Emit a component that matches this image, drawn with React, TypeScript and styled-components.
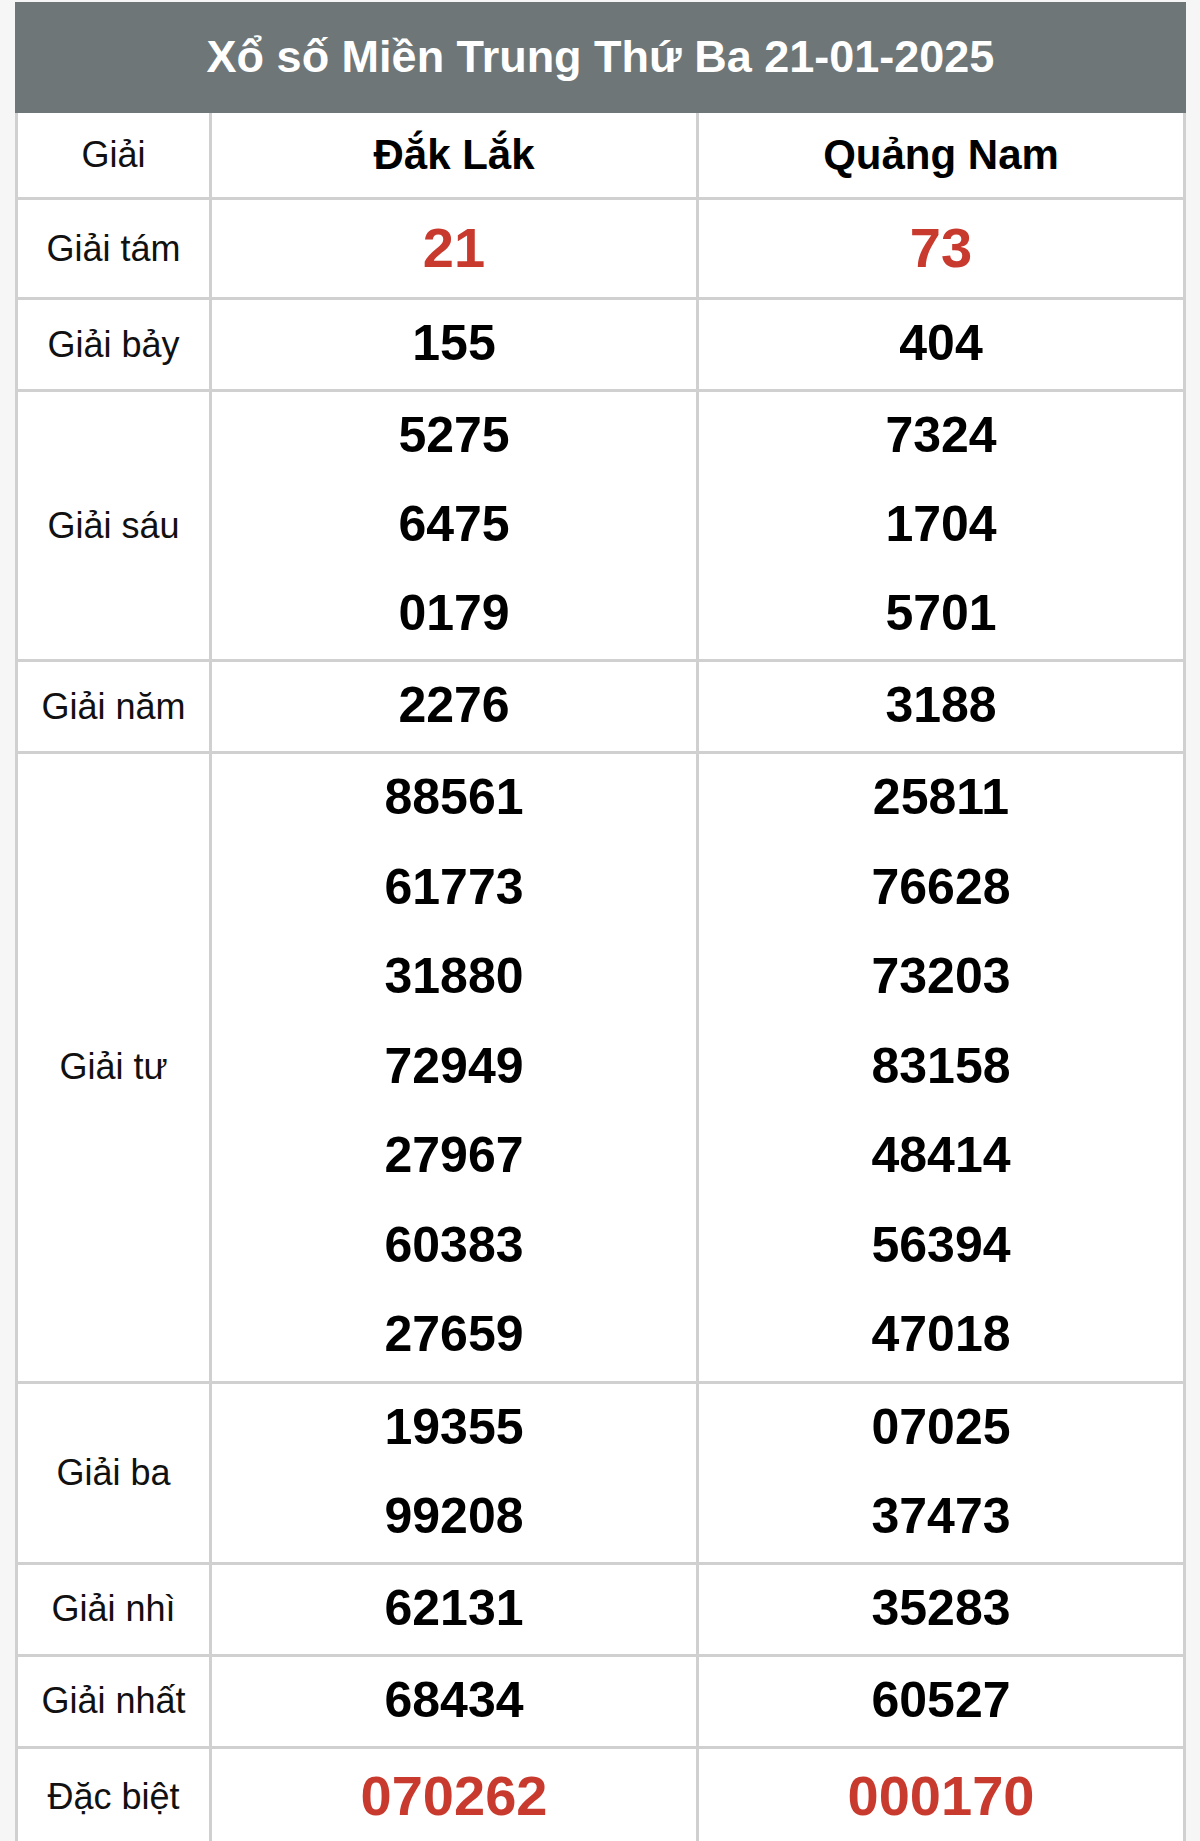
import React from "react";
import styled, { createGlobalStyle } from "styled-components";

const Global = createGlobalStyle`
  html, body { margin: 0; padding: 0; background: #f6f6f6; }
  body { font-family: "Liberation Sans", Arial, Helvetica, sans-serif; }
`;

const Page = styled.div`
  padding: 2px 14px 0 15px;
`;

const Title = styled.div`
  height: 111px;
  background: #6e7677;
  color: #fff;
  font-weight: 700;
  font-size: 45px;
  display: flex;
  align-items: center;
  justify-content: center;
  padding-bottom: 2px;
  box-sizing: border-box;
`;

const Grid = styled.div`
  display: grid;
  grid-template-columns: 191px 1fr 1fr;
  column-gap: 3px;
  row-gap: 3px;
  background: #d0d0d0;
  padding: 0 3px;
`;

const Cell = styled.div<{ $head?: boolean }>`
  background: #fff;
  display: flex;
  flex-direction: column;
  align-items: center;
  justify-content: center;
  min-height: ${(p) => (p.$head ? "84px" : "0")};
`;

const Label = styled.span`
  font-size: 36px;
  color: #111;
`;

const Province = styled.span`
  font-size: 42px;
  font-weight: 700;
  color: #000;
`;

const Num = styled.div<{ $red?: boolean; $h: number }>`
  height: ${(p) => p.$h}px;
  display: flex;
  align-items: center;
  justify-content: center;
  padding-bottom: 3px;
  box-sizing: border-box;
  font-weight: 700;
  font-size: ${(p) => (p.$red ? "56px" : "50px")};
  color: ${(p) => (p.$red ? "#c93a2e" : "#000")};
`;

type Row = { label: string; a: string[]; b: string[]; red?: boolean; h?: number };

const rows: Row[] = [
  { label: "Giải tám", a: ["21"], b: ["73"], red: true, h: 97 },
  { label: "Giải bảy", a: ["155"], b: ["404"] },
  { label: "Giải sáu", a: ["5275", "6475", "0179"], b: ["7324", "1704", "5701"] },
  { label: "Giải năm", a: ["2276"], b: ["3188"] },
  {
    label: "Giải tư",
    a: ["88561", "61773", "31880", "72949", "27967", "60383", "27659"],
    b: ["25811", "76628", "73203", "83158", "48414", "56394", "47018"],
    h: 89.5,
  },
  { label: "Giải ba", a: ["19355", "99208"], b: ["07025", "37473"] },
  { label: "Giải nhì", a: ["62131"], b: ["35283"] },
  { label: "Giải nhất", a: ["68434"], b: ["60527"] },
  { label: "Đặc biệt", a: ["070262"], b: ["000170"], red: true, h: 97 },
];

export default function App() {
  return (
    <Page>
      <Global />
      <Title>Xổ số Miền Trung Thứ Ba 21-01-2025</Title>
      <Grid>
        <Cell $head>
          <Label>Giải</Label>
        </Cell>
        <Cell $head>
          <Province>Đắk Lắk</Province>
        </Cell>
        <Cell $head>
          <Province>Quảng Nam</Province>
        </Cell>
        {rows.map((r) => (
          <React.Fragment key={r.label}>
            <Cell>
              <Label>{r.label}</Label>
            </Cell>
            <Cell>
              {r.a.map((n, i) => (
                <Num key={i} $red={r.red} $h={r.h ?? 89}>
                  {n}
                </Num>
              ))}
            </Cell>
            <Cell>
              {r.b.map((n, i) => (
                <Num key={i} $red={r.red} $h={r.h ?? 89}>
                  {n}
                </Num>
              ))}
            </Cell>
          </React.Fragment>
        ))}
      </Grid>
    </Page>
  );
}
